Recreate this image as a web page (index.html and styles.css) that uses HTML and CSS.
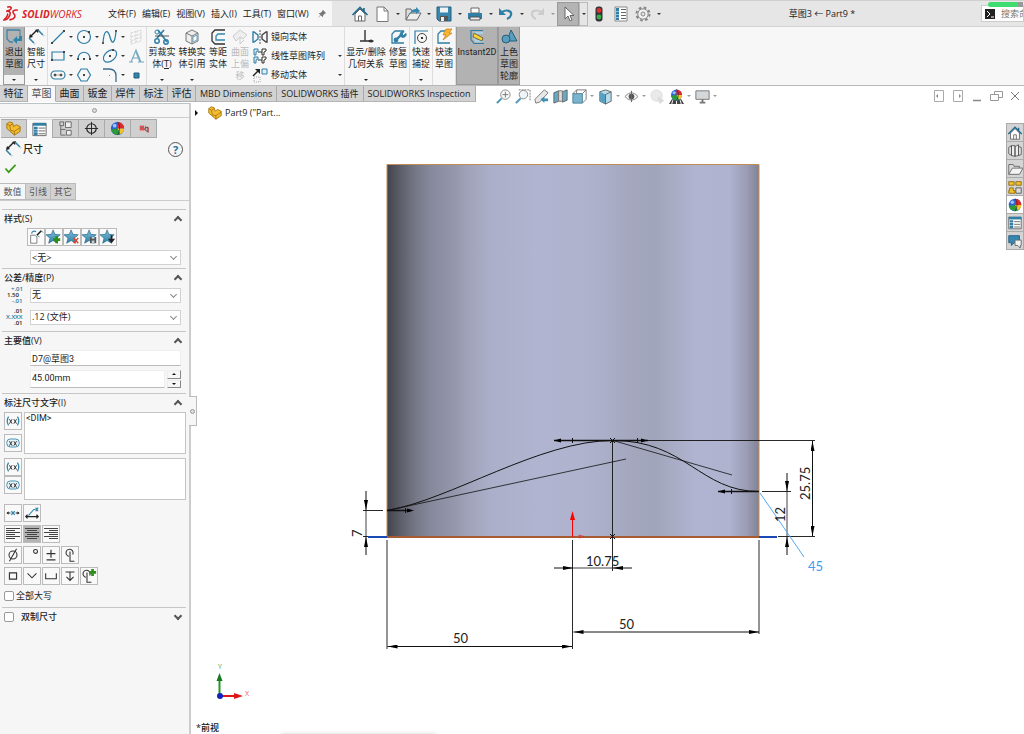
FILE: index.html
```html
<!DOCTYPE html>
<html lang="zh-CN">
<head>
<meta charset="utf-8">
<meta name="viewport" content="width=device-width, initial-scale=1">
<title>草图3 ← Part9 *</title>
<link rel="stylesheet" href="styles.css">
</head>
<body>
<svg class="defs" aria-hidden="true">
  <defs>
    <linearGradient id="star-fill" x1="0" y1="0" x2="0" y2="1"><stop offset="0" stop-color="#7cc0dc"/><stop offset="1" stop-color="#2f7fa6"/></linearGradient>
    <symbol id="i-home" viewBox="0 0 18 18"><path d="M4 9v7h10V9L9 4z" fill="#fff" stroke="#666"/><path d="M7.5 16v-5h3v5" fill="none" stroke="#666"/><path d="M1.500 10 9 2.500 16.500 10M13 3v3" fill="none" stroke="#23688c" stroke-width="1.600"/></symbol>
    <symbol id="i-part" viewBox="0 0 18 18"><path d="M2 9V4l3-2 3 1 1 4 3-2 4 2v5l-6 4z" fill="#f3bd2d" stroke="#a87612"/><path d="M2 4l3 2 1 5 4 1 6-4M10 12v4M5 6l3-2" fill="none" stroke="#a87612"/></symbol>
    <symbol id="i-props" viewBox="0 0 18 18"><path d="M2 2.500h14v13H2z" fill="#fff" stroke="#666"/><path d="M2 2h14v3H2z" fill="#2f7fa6"/><path d="M3 6h4v2.500H3zM3 9h4v2.500H3zM3 12h4v3H3z" fill="#2f7fa6"/><path d="M8 7.500h7M8 10.500h7M8 13.500h7" stroke="#666"/></symbol>
    <symbol id="i-dim" viewBox="0 0 18 18"><path d="M3 9 10 2" stroke="#222" stroke-width="1.500"/><path d="M2 10l1-4 3 3zM12 1 8 2l3 3z" fill="#222"/><path d="M2 10l6 6M11 2l6 6" stroke="#2f7fa6" stroke-width="1.500" stroke-dasharray="7 1"/></symbol>
    <symbol id="i-star" viewBox="0 0 18 18"><path d="M8 1l2 5 6 .5-4.500 4L13 16l-5-3-5 3 1.500-5.500L0 6.500 6 6z" fill="url(#star-fill)" stroke="#245f7e" stroke-width=".7"/></symbol>
    <symbol id="i-ball" viewBox="0 0 18 18"><circle cx="9" cy="9" r="7" fill="#2a62d4"/><path d="M9 2a7 7 0 0 1 7 7L9 9z" fill="#e1282b"/><path d="M9 9h7a7 7 0 0 1-4 6z" fill="#f4c32c"/><path d="M9 9l3 6a7 7 0 0 1-10-5z" fill="#2b9a3b"/><path d="M9 2c3 3 3 9 0 14" fill="none" stroke="#222" stroke-width=".7"/><circle cx="6" cy="6" r="2" fill="#9fc1fa"/></symbol>
    <symbol id="i-corner" viewBox="0 0 18 18"><path d="M15 3H6L3 6v9h12" fill="none" stroke="#2f7fa6" stroke-width="1.300"/></symbol>
    <symbol id="i-paren" viewBox="0 0 18 18"><path d="M4 4q-3 5 0 10M14 4q3 5 0 10" fill="none" stroke="#2f86ad" stroke-width="1.400"/><path d="M5 7l3 5M8 7l-3 5M10 7l3 5M13 7l-3 5" stroke="#222"/></symbol>
    <symbol id="i-round" viewBox="0 0 18 18"><rect x="2" y="4.500" width="14" height="9" rx="4" fill="#e8f2f6" stroke="#2f86ad"/><path d="M5 7l3 5M8 7l-3 5M10 7l3 5M13 7l-3 5" stroke="#222"/></symbol>
    <symbol id="i-lines-l" viewBox="0 0 16 16"><path d="M1 2.500h14M1 4.500h9M1 6.500h14M1 8.500h9M1 10.500h14M1 12.500h9" stroke="#444"/></symbol>
    <symbol id="i-lines-c" viewBox="0 0 16 16"><path d="M1 2.500h14M3 4.500h10M1 6.500h14M3 8.500h10M1 10.500h14M3 12.500h10" stroke="#444"/></symbol>
    <symbol id="i-lines-r" viewBox="0 0 16 16"><path d="M1 2.500h14M6 4.500h9M1 6.500h14M6 8.500h9M1 10.500h14M6 12.500h9" stroke="#444"/></symbol>
    <symbol id="i-cl" viewBox="0 0 18 18"><path d="M8 10.500a4 4 0 1 1 4-2" fill="none" stroke="#333" stroke-width="1.200"/><path d="M9 5v11h5" fill="none" stroke="#333" stroke-width="1.200"/></symbol>
  </defs>
</svg>

<header class="titlebar">
  <div class="brand">
    <svg class="brand-mark" viewBox="0 0 16 16" aria-hidden="true"><path d="M4 2c4-1 5 1 2 3L3 6c4-1 5 2 2 6-1 2-3 2-4 2 3-3 4-5 3-6M14 5c-3-1-6 1-4 3 2 2 2 5-4 6" fill="none" stroke="#d9232a" stroke-width="1.500"/></svg>
    <span class="brand-name"><b>SOLID</b>WORKS</span>
  </div>
  <nav class="menu" aria-label="主菜单">
    <button>文件(F)</button><button>编辑(E)</button><button>视图(V)</button><button>插入(I)</button><button>工具(T)</button><button>窗口(W)</button>
    <button class="pin" aria-label="固定"><svg viewBox="0 0 12 12"><path d="M7 1l4 4-1.500.5-2 2L7 10 4.500 7.500 1 11l3-4L2 5l2.500-.5 2-2z" fill="#777"/></svg></button>
  </nav>
  <div class="quick">
    <button class="qt" aria-label="主页"><svg><use href="#i-home"/></svg></button>
    <button class="qt" aria-label="新建"><svg viewBox="0 0 18 18"><path d="M4 2h7l4 4v10.500H4z" fill="#fff" stroke="#777"/><path d="M11 2v4h4" fill="none" stroke="#777"/></svg></button><button class="dd" aria-label="更多"></button>
    <button class="qt" aria-label="打开"><svg viewBox="0 0 18 18"><path d="M2 15V4h5l1 2h5v3" fill="#ddd" stroke="#666"/><path d="M2 15 6 8h11l-4 7z" fill="#eee" stroke="#666"/><path d="M6 9c1-4 4-5 6-5V2l4 4-4 3V7c-2 0-4 0-6 2z" fill="#3688b0"/></svg></button><button class="dd" aria-label="更多"></button>
    <button class="qt" aria-label="保存"><svg viewBox="0 0 18 18"><path d="M2 2h14v14H4l-2-2z" fill="#3a86ac" stroke="#245f7e"/><path d="M5 2.500h8v5H5z" fill="#eef3f5"/><path d="M5 11h8v5H5z" fill="#555"/><path d="M6 12h3v4H6z" fill="#eee"/></svg></button><button class="dd" aria-label="更多"></button>
    <button class="qt" aria-label="打印"><svg viewBox="0 0 18 18"><path d="M5 3h8v5H5z" fill="#fff" stroke="#666"/><path d="M2 8h14v6H2z" fill="#2f7fa6"/><path d="M4 12h10v3H4z" fill="#eee" stroke="#555"/></svg></button><button class="dd" aria-label="更多"></button>
    <button class="qt" aria-label="撤销"><svg viewBox="0 0 18 18"><path d="M5 7c5-3 10-1 9 3-.5 2-2 3-4 4" fill="none" stroke="#2f7fa6" stroke-width="2.200"/><path d="M2 3v7h7z" fill="#2f7fa6"/></svg></button><button class="dd" aria-label="更多"></button>
    <button class="qt" aria-label="重做"><svg viewBox="0 0 18 18"><path d="M13 7C8 4 3 6 4 10c.5 2 2 3 4 4" fill="none" stroke="#ccc" stroke-width="2.200"/><path d="M16 3v7H9z" fill="#ccc"/></svg></button><button class="dd dim" aria-label="更多"></button>
    <button class="qt on" aria-label="选择"><svg viewBox="0 0 18 18"><path d="M6 2v12l3-3 2 5 2-1-2-4.500h4z" fill="#fff" stroke="#666"/></svg></button><button class="dd boxed" aria-label="更多"></button>
    <button class="qt" aria-label="重建"><svg viewBox="0 0 18 18"><rect x="5.500" y="1.500" width="7" height="15" rx="3" fill="#333"/><circle cx="9" cy="5.500" r="2.400" fill="#df3030"/><circle cx="9" cy="12" r="2.400" fill="#35b14b"/></svg></button>
    <button class="qt" aria-label="文件属性"><svg viewBox="0 0 18 18"><path d="M3 2h12v14H3z" fill="#fff" stroke="#888"/><path d="M4 3h3v3H4zM4 6.500h3v2.500H4zM4 9.500h3V12H4zM4 12.500h3V15H4z" fill="#2f7fa6"/><path d="M9 4.500h5M9 7.500h5M9 10.500h5M9 13.500h5" stroke="#666"/></svg></button>
    <button class="qt" aria-label="选项"><svg viewBox="0 0 18 18"><circle cx="9" cy="9" r="6.500" fill="none" stroke="#888" stroke-width="2" stroke-dasharray="2.600 2.500"/><circle cx="9" cy="9" r="5.200" fill="#f2f2f2" stroke="#888"/><circle cx="9" cy="9" r="2" fill="#e6e6e6" stroke="#888"/></svg></button><button class="dd" aria-label="更多"></button>
  </div>
  <h1 class="doc-title">草图3 ← Part9 *</h1>
  <label class="search"><svg viewBox="0 0 10 10" aria-hidden="true"><path d="M0 0h10v10H0z" fill="#222"/><path d="M2 2l3 3-3 3M6 8h3" fill="none" stroke="#fff"/></svg><input type="text" placeholder="搜索命令" aria-label="搜索命令"><span class="progress"></span></label>
</header>

<section class="ribbon" aria-label="草图工具">
  <button class="tool pressed"><svg viewBox="0 0 18 18"><path d="M8 14H5L2 11V2h13" fill="none" stroke="#3d84a8" stroke-width="1.300"/><path d="M15 2v6" stroke="#3d84a8"/><path d="M8 12l4-4v2.500h2V8h3v5h-5v3z" fill="#2f86ad"/></svg><span>退出<br>草图</span><i class="caret light"></i></button>
  <button class="tool smart"><svg><use href="#i-dim"/></svg><span>智能<br>尺寸</span><i class="caret"></i></button>
  <div class="sketch-grid">
    <button aria-label="直线"><svg viewBox="0 0 18 18"><path d="M3 15 15 3" stroke="#2f7fa6" stroke-width="1.200"/><path d="M2 14h2v2H2zM14 2h2v2h-2z" fill="#444"/></svg></button><button class="dd" aria-label="更多"></button>
    <button aria-label="圆"><svg viewBox="0 0 18 18"><circle cx="9" cy="9" r="6.500" fill="none" stroke="#2f7fa6" stroke-width="1.200"/><path d="M8 8h2v2H8zM13 3h2v2h-2z" fill="#444"/></svg></button><button class="dd" aria-label="更多"></button>
    <button aria-label="样条曲线"><svg viewBox="0 0 18 18"><path d="M2 15C3 1 7 1 9 9s5 7 6-6" fill="none" stroke="#2f7fa6" stroke-width="1.300"/><path d="M1 14h2v2H1zM14 2h2v2h-2z" fill="#555"/></svg></button><button class="dd" aria-label="更多"></button>
    <button aria-label="平面"><svg viewBox="0 0 18 18"><path d="M4 5l10-3v11L4 16zM4 9l10-3M4 13l10-4M9 3v12" fill="none" stroke="#d0d0d0" stroke-dasharray="2 1"/></svg></button>
    <button aria-label="矩形"><svg viewBox="0 0 18 18"><path d="M3 5h12v8H3z" fill="none" stroke="#2f7fa6" stroke-width="1.200"/><path d="M2 12h2v2H2zM14 4h2v2h-2z" fill="#444"/></svg></button><button class="dd" aria-label="更多"></button>
    <button aria-label="圆弧"><svg viewBox="0 0 18 18"><path d="M3 12c0-9 12-9 12 0" fill="none" stroke="#2f7fa6" stroke-width="1.200"/><path d="M2 11h2v2H2zM14 11h2v2h-2zM8 11h2v2H8z" fill="#444"/></svg></button><button class="dd" aria-label="更多"></button>
    <button aria-label="椭圆"><svg viewBox="0 0 18 18"><ellipse cx="9" cy="9" rx="7.500" ry="5" transform="rotate(-40 9 9)" fill="none" stroke="#2f7fa6" stroke-width="1.200"/><path d="M8 8h2v2H8zM11 2h2v2h-2z" fill="#444"/></svg></button><button class="dd" aria-label="更多"></button>
    <button aria-label="文字"><svg viewBox="0 0 18 18"><path d="M2 15h4M11 15h6M4 15 9 3l5 12M6 11h6M9 5l4 10" fill="none" stroke="#75a9c2" stroke-width="1.100"/></svg></button>
    <button aria-label="槽口"><svg viewBox="0 0 18 18"><rect x="2" y="5" width="14" height="8" rx="4" fill="none" stroke="#2f7fa6" stroke-width="1.200"/><path d="M5 8h2v2H5zM11 8h2v2h-2zM7 9h4" fill="#444" stroke="#555" stroke-width=".5"/></svg></button><button class="dd" aria-label="更多"></button>
    <button aria-label="多边形"><svg viewBox="0 0 18 18"><path d="M6 3h6l3.500 6-3.500 6H6L2.500 9z" fill="none" stroke="#2f7fa6" stroke-width="1.200"/><path d="M8 8h2v2H8z" fill="#444"/></svg></button><span></span>
    <button aria-label="圆角"><svg viewBox="0 0 18 18"><path d="M2 3h6q7 0 7 7v6" fill="none" stroke="#3b6f8b" stroke-width="1.300"/><path d="M8 9h1v1H8z" fill="#888"/></svg></button><button class="dd" aria-label="更多"></button>
    <button aria-label="点"><svg viewBox="0 0 18 18"><path d="M7 7h5v5H7z" fill="#2f86ad" stroke="#245f7e"/></svg></button>
  </div>
  <div class="group edit">
    <button class="tool wide"><svg viewBox="0 0 18 18"><path d="M5 2l9 12M11 2 4 10" stroke="#2f7fa6" stroke-width="1.800"/><path d="M2 8h14" stroke="#555"/><circle cx="4" cy="13" r="2.200" fill="none" stroke="#2f7fa6" stroke-width="1.500"/><circle cx="13" cy="14" r="2.200" fill="none" stroke="#2f7fa6" stroke-width="1.500"/><circle cx="4" cy="4" r="2" fill="none" stroke="#2f7fa6"/></svg><span>剪裁实<br>体(<u>T</u>)</span><i class="caret"></i></button>
    <button class="tool wide"><svg viewBox="0 0 18 18"><path d="M3 5l6-3 6 3v8l-6 3-6-3z" fill="#eee" stroke="#777"/><path d="M3 5l6 3 6-3M9 8v8" fill="none" stroke="#777"/><path d="M10 9l4-2v5l-4 2z" fill="#fff" stroke="#69a5c1"/></svg><span>转换实<br>体引用</span><i class="caret"></i></button>
    <button class="tool"><svg viewBox="0 0 18 18"><path d="M16 2H6L3 5v8l3 3h10" fill="none" stroke="#333" stroke-width="1.300"/><path d="M16 6H9L7 8v4h9" fill="none" stroke="#2f86ad" stroke-width="1.300"/></svg><span>等距<br>实体</span></button>
    <button class="tool" disabled><svg viewBox="0 0 18 18"><path d="M2 8l7-6 7 5-4 4-3-2-4 4z" fill="#eee" stroke="#ccc"/><path d="M9 9v7l4-4" fill="none" stroke="#ccc"/></svg><span>曲面<br>上偏<br>移</span></button>
  </div>
  <div class="list">
    <button><svg viewBox="0 0 18 18"><path d="M2 4v10h1l4-3V7L3 4z" fill="none" stroke="#2f7fa6" stroke-width="1.400"/><path d="M16 4v10h-1l-4-3V7l4-3z" fill="none" stroke="#444" stroke-width="1.400"/><path d="M9 2v14" stroke="#555" stroke-dasharray="2 1"/></svg>镜向实体</button><span></span>
    <button><svg viewBox="0 0 18 18"><path d="M3 2h4v2L5 5v3H3zM3 10h4v2l-2 1v3H3z" fill="#d4eaf3" stroke="#2f7fa6"/><path d="M11 2h4v2l-2 1v3h-2zM11 10h4v2l-2 1v3h-2zM7 5h4M7 13h4" fill="none" stroke="#333"/></svg>线性草图阵列</button><button class="dd" aria-label="更多"></button>
    <button><svg viewBox="0 0 18 18"><path d="M11 3h5v5h-5z" fill="#e2eff5" stroke="#2f7fa6"/><path d="M2 10l5-5" stroke="#222" stroke-width="1.500"/><path d="M4 3h5v5z" fill="#222"/><path d="M3 11h6v5H3z" fill="none" stroke="#aaa" stroke-dasharray="1 1"/></svg>移动实体</button><button class="dd" aria-label="更多"></button>
  </div>
  <div class="group">
    <button class="tool rels"><svg viewBox="0 0 18 18"><path d="M8 2v11M3 13h10" stroke="#333" stroke-width="1.400"/><path d="M11 13q3-3 6 0-3 3-6 0" fill="#333"/></svg><span>显示/删除<br>几何关系</span><i class="caret"></i></button>
    <button class="tool"><svg><use href="#i-corner"/></svg><svg class="over" viewBox="0 0 18 18"><path d="M7 12l5-5" stroke="#2f7fa6" stroke-width="2.400"/><path d="M15 3.500 13 6l1.500 1.500 2.500-2a3 3 0 1 1-2-2z" fill="#2f7fa6" stroke="#2f7fa6"/><circle cx="7" cy="12" r="2.400" fill="#2f7fa6"/></svg><span>修复<br>草图</span></button>
  </div>
  <div class="group"><button class="tool"><svg viewBox="0 0 18 18"><path d="M3 16V3h13" fill="none" stroke="#2f7fa6" stroke-width="1.200"/><circle cx="10" cy="10" r="4.500" fill="none" stroke="#444"/><path d="M9 9h2v2H9z" fill="#333"/></svg><span>快速<br>捕捉</span><i class="caret"></i></button></div>
  <div class="group"><button class="tool"><svg><use href="#i-corner"/></svg><svg class="over" viewBox="0 0 18 18"><path d="M11 1h6l-3 4h3l-9 7 3-5H8z" fill="#f6b62c" stroke="#c87719" stroke-width=".7"/></svg><span>快速<br>草图</span></button></div>
  <button class="tool pressed instant"><svg viewBox="0 0 18 18"><path d="M15 2.500H3v9l3 4h10" fill="none" stroke="#2f7fa6" stroke-width="1.200"/><path d="M15 5H6v5l2 3h7" fill="none" stroke="#a9dcee" stroke-width="1.400"/><path d="M6 5l9 5-1 3-9-4z" fill="#f6d330" stroke="#444" stroke-width=".7"/></svg><span>Instant2D</span></button>
  <button class="tool pressed"><svg viewBox="0 0 18 18"><path d="M11 2l6 11H7z" fill="#5a9dbd" stroke="#245f7e"/><circle cx="6" cy="11" r="4" fill="#5a9dbd" stroke="#245f7e"/></svg><span>上色<br>草图<br>轮廓</span></button>
</section>

<div class="tabrow">
  <nav class="tabs" aria-label="命令管理器">
    <button>特征</button><button class="active">草图</button><button>曲面</button><button>钣金</button><button>焊件</button><button>标注</button><button>评估</button><button class="en">MBD Dimensions</button><button class="en">SOLIDWORKS 插件</button><button class="en">SOLIDWORKS Inspection</button>
  </nav>
  <div class="viewtools">
    <button aria-label="整屏显示"><svg viewBox="0 0 18 18"><circle cx="11" cy="7" r="5" fill="#f6f8f9" stroke="#888"/><path d="M11 4v6M8 7h6" stroke="#777"/><path d="M7 11l-5 5" stroke="#4a97bb" stroke-width="2.200"/></svg></button>
    <button aria-label="局部放大"><svg viewBox="0 0 18 18"><path d="M5 2h12v12" fill="none" stroke="#777" stroke-dasharray="2 1"/><circle cx="10" cy="7" r="4.500" fill="#eef5f8" stroke="#888"/><path d="M7 11l-5 5" stroke="#4a97bb" stroke-width="2.200"/></svg></button>
    <button aria-label="上一视图"><svg viewBox="0 0 18 18"><path d="M2 12 12 2l4 3L7 15l-4 1z" fill="#e8e8e8" stroke="#777"/><path d="M8 12l4-3v2h4v3h-4v2z" fill="#3f90b6"/></svg></button>
    <button aria-label="剖面视图"><svg viewBox="0 0 18 18"><path d="M2 5l5-2v11l-5 2zM11 4l5-2v11l-5 2z" fill="#65a9c7" stroke="#666"/><path d="M7 3h4v11H7z" fill="#ddd" stroke="#777"/></svg></button>
    <button aria-label="视图定向"><svg viewBox="0 0 18 18"><path d="M2 6h10v10H2z" fill="#79b5cf" stroke="#4b7f98"/><path d="M2 6l4-4h10v10l-4 4M16 2l-4 4M6 2v4" fill="none" stroke="#777"/></svg></button><button class="dd dim" aria-label="更多"></button>
    <button aria-label="显示样式"><svg viewBox="0 0 18 18"><path d="M3 4l6-2 6 2v10l-6 3-6-3z" fill="#b4dbea" stroke="#666"/><path d="M3 4l6 3v10l-6-3z" fill="#56a0c2"/><path d="M9 7l6-3M9 7v10" stroke="#666"/></svg></button><button class="dd dim" aria-label="更多"></button>
    <button aria-label="隐藏/显示"><svg viewBox="0 0 18 18"><path d="M2 9q7-8 14 0-7 8-14 0z" fill="#f5f5f5" stroke="#888"/><circle cx="9" cy="9" r="3" fill="#555"/><path d="M9 3v12" stroke="#666"/></svg></button><button class="dd dim" aria-label="更多"></button>
    <button aria-label="编辑外观"><svg viewBox="0 0 18 18"><circle cx="8" cy="8" r="6" fill="#e9e9e9" stroke="#ddd"/><path d="M10 9l6 4-4 4-3-4z" fill="#dcdcdc"/></svg></button>
    <button aria-label="应用布景"><svg viewBox="0 0 18 18"><path d="M1 17l3-5h10l3 5z" fill="#444"/><path d="M5 13l-1 4M9 13v4M13 13l1 4" stroke="#fff"/></svg><svg class="over" viewBox="0 0 18 18"><use href="#i-ball" x="1" width="16" height="15"/></svg></button><button class="dd dim" aria-label="更多"></button>
    <button aria-label="视图设定"><svg viewBox="0 0 18 18"><path d="M2 3h14v9H2z" fill="#d5d8da" stroke="#777"/><path d="M9 12v3M6 15.500h6" stroke="#777" stroke-width="2"/></svg></button><button class="dd dim" aria-label="更多"></button>
  </div>
  <div class="winbtns">
    <button aria-label="左侧窗格"><svg viewBox="0 0 18 18"><path d="M4.500 3.500h9v11h-9z" fill="none" stroke="#aaa"/><path d="M8 7v4L6 9z" fill="#888"/></svg></button>
    <button aria-label="右侧窗格"><svg viewBox="0 0 18 18"><path d="M4.500 3.500h9v11h-9z" fill="none" stroke="#aaa"/><path d="M10 7v4l2-2z" fill="#888"/></svg></button>
    <button aria-label="最小化"><svg viewBox="0 0 18 18"><path d="M5 13.500h8" stroke="#888" stroke-width="1.500"/></svg></button>
    <button aria-label="还原"><svg viewBox="0 0 18 18"><path d="M3.500 7.500h8v6h-8zM7.500 7V4.500h8v6H12" fill="none" stroke="#999"/></svg></button>
    <button aria-label="关闭"><svg viewBox="0 0 18 18"><path d="M5 5l8 8M13 5l-8 8" stroke="#777"/></svg></button>
  </div>
</div>

<main class="work">
  <aside class="panel" aria-label="属性管理器">
    <div class="grip"><i class="dot"></i></div>
    <div class="ptabs">
      <button aria-label="特征树"><svg><use href="#i-part"/></svg></button><button class="active" aria-label="属性"><svg><use href="#i-props"/></svg></button>
      <button aria-label="配置"><svg viewBox="0 0 18 18"><path d="M3 2h4v4H3zM4 6v10h5M4 10h5" fill="none" stroke="#666"/><path d="M9 2h6v6H9zM10 11h5v5h-5z" fill="#eee" stroke="#666"/></svg></button>
      <button aria-label="尺寸专家"><svg viewBox="0 0 18 18"><circle cx="9" cy="9" r="5" fill="none" stroke="#222" stroke-width="1.200"/><path d="M9 2v14M2 9h14" stroke="#222"/></svg></button>
      <button aria-label="外观"><svg><use href="#i-ball"/></svg></button>
      <button aria-label="检查"><svg viewBox="0 0 18 18"><path d="M5 6h4v5H5z" fill="#e54c4c"/><path d="M9 6v5M11 6v5M13 7v5M6 8h3" stroke="#777"/><path d="M11 8h3v5l-4-3z" fill="none" stroke="#933"/></svg></button>
    </div>
    <header class="phead"><svg><use href="#i-dim"/></svg><h2>尺寸</h2><button class="help" aria-label="帮助">?</button></header>
    <button class="ok" aria-label="确定"><svg viewBox="0 0 14 12"><path d="M1.500 6 5 10l7.500-8" fill="none" stroke="#389b16" stroke-width="1.800"/></svg></button>
    <div class="subtabs"><button class="active">数值</button><button>引线</button><button>其它</button></div>

    <section class="sec s-style">
      <h3>样式(S)<i class="chev"></i></h3>
      <div class="stars">
        <button aria-label="应用默认"><svg viewBox="0 0 18 18"><path d="M3 7h5l2 2v7H3z" fill="#fff" stroke="#777"/><path d="M4 5c1-3 3-3 5-2" fill="none" stroke="#2f7fa6" stroke-width="1.300"/><path d="M10 7l5-5" stroke="#222" stroke-width="1.800"/><path d="M13 9l-3-2M15 2l2 2" stroke="#2f7fa6"/></svg></button>
        <button aria-label="添加样式"><svg><use href="#i-star"/></svg><svg class="over" viewBox="0 0 18 18"><path d="M12 8v8M8 12h8" stroke="#2d8f1a" stroke-width="3"/></svg></button>
        <button aria-label="删除样式"><svg><use href="#i-star"/></svg><svg class="over" viewBox="0 0 18 18"><path d="M11 10l5 6M16 10l-5 6" stroke="#e23b1d" stroke-width="1.500"/></svg></button>
        <button aria-label="保存样式"><svg><use href="#i-star"/></svg><svg class="over" viewBox="0 0 18 18"><path d="M9 9h7v7H9z" fill="#555"/><path d="M11 9h3v2h-3zM11 13h3v3h-3z" fill="#b9d4df"/></svg></button>
        <button aria-label="装入样式"><svg><use href="#i-star"/></svg><svg class="over" viewBox="0 0 18 18"><path d="M12 7v4H9l4 5 4-5h-3V7z" fill="#222"/></svg></button>
      </div>
      <div class="sel"><select aria-label="样式"><option>&lt;无&gt;</option></select></div>
    </section>
    <section class="sec s-tol">
      <h3>公差/精度(P)<i class="chev"></i></h3>
      <div class="field"><svg viewBox="0 0 18 18"><text x="1" y="11" class="t-dark">1.50</text><text x="5" y="5" class="t-blue">+.01</text><text x="6" y="17" class="t-blue">-.01</text></svg><div class="sel"><select aria-label="公差类型"><option>无</option></select></div></div>
      <div class="field"><svg viewBox="0 0 18 18"><text x="0" y="11" class="t-blue">X.XXX</text><text x="8" y="5" class="t-dark">.01</text><text x="8" y="17" class="t-dark">.01</text></svg><div class="sel"><select aria-label="单位精度"><option>.12 (文件)</option></select></div></div>
    </section>
    <section class="sec s-val">
      <h3>主要值(V)<i class="chev"></i></h3>
      <input type="text" value="D7@草图3" aria-label="名称">
      <div class="spin"><input type="text" value="45.00mm" aria-label="尺寸值"><div><button aria-label="增加"><i class="up"></i></button><button aria-label="减少"><i class="down"></i></button></div></div>
    </section>
    <section class="sec s-text">
      <h3>标注尺寸文字(I)<i class="chev"></i></h3>
      <div class="note first"><div><button class="tb" aria-label="加括号"><svg><use href="#i-paren"/></svg></button><button class="tb" aria-label="检查尺寸"><svg><use href="#i-round"/></svg></button></div><textarea aria-label="尺寸文字">&lt;DIM&gt;</textarea></div>
      <div class="note"><div><button class="tb" aria-label="加括号"><svg><use href="#i-paren"/></svg></button><button class="tb" aria-label="检查尺寸"><svg><use href="#i-round"/></svg></button></div><textarea aria-label="下方文字"></textarea></div>
      <div class="btns"><button class="tb" aria-label="居中尺寸"><svg viewBox="0 0 18 18"><path d="M2 9h4M12 9h4" stroke="#222" stroke-width="1.300"/><path d="M4 7v4L2 9zM14 7v4l2-2z" fill="#222"/><path d="M7 7l4 4M11 7l-4 4" stroke="#2f86ad" stroke-width="1.300"/></svg></button><button class="tb" aria-label="等距文字"><svg viewBox="0 0 18 18"><path d="M2 13h14M4 11l-2 2 2 2M14 11l2 2-2 2" fill="none" stroke="#222" stroke-width="1.300"/><path d="M5 12l6-7h2M13 3l3 4M16 3l-3 4" fill="none" stroke="#2f86ad" stroke-width="1.200"/></svg></button></div>
      <div class="btns"><button class="tb" aria-label="左对齐"><svg><use href="#i-lines-l"/></svg></button><button class="tb on" aria-label="居中"><svg><use href="#i-lines-c"/></svg></button><button class="tb" aria-label="右对齐"><svg><use href="#i-lines-r"/></svg></button></div>
      <div class="btns"><button class="tb" aria-label="直径"><svg viewBox="0 0 18 18"><circle cx="9" cy="9" r="4.500" fill="none" stroke="#333" stroke-width="1.200"/><path d="M5 16l8-14" stroke="#333" stroke-width="1.200"/></svg></button><button class="tb" aria-label="度"><svg viewBox="0 0 18 18"><circle cx="13" cy="5" r="2.200" fill="none" stroke="#333" stroke-width="1.200"/></svg></button><button class="tb" aria-label="正负"><svg viewBox="0 0 18 18"><path d="M9 3v9M4 7.500h10M4 14.500h10" stroke="#333" stroke-width="1.300"/></svg></button><button class="tb" aria-label="中心线"><svg><use href="#i-cl"/></svg></button></div>
      <div class="btns"><button class="tb" aria-label="方形"><svg viewBox="0 0 18 18"><path d="M5 5.500h8v7H5z" fill="none" stroke="#333" stroke-width="1.300"/></svg></button><button class="tb" aria-label="埋头孔"><svg viewBox="0 0 18 18"><path d="M4 6l5 5 5-5" fill="none" stroke="#333" stroke-width="1.200"/></svg></button><button class="tb" aria-label="柱形沉头孔"><svg viewBox="0 0 18 18"><path d="M3 6v6h12V6" fill="none" stroke="#333" stroke-width="1.200"/></svg></button><button class="tb" aria-label="深度"><svg viewBox="0 0 18 18"><path d="M4 4.500h10M9 5v9M5 10l4 4 4-4" fill="none" stroke="#333" stroke-width="1.200"/></svg></button><button class="tb" aria-label="更多符号"><svg><use href="#i-cl" x="-2"/></svg><svg class="over" viewBox="0 0 18 18"><path d="M13 1v8M9 5h8" stroke="#2d8f1a" stroke-width="3"/></svg></button></div>
      <label class="check caps"><input type="checkbox">全部大写</label>
    </section>
    <section class="sec"><h3 class="dual"><label class="check"><input type="checkbox">双制尺寸</label><i class="chev closed"></i></h3></section>
    <button class="handle" aria-label="折叠面板"><i class="dot"></i></button>
  </aside>

  <div class="viewport">
    <svg class="model" viewBox="191 103 833 631" role="img" aria-label="草图3 前视图">
      <defs>
        <linearGradient id="cyl"><stop offset="0" stop-color="#42434c"/><stop offset=".04" stop-color="#5f616d"/><stop offset=".08" stop-color="#777988"/><stop offset=".12" stop-color="#868a9c"/><stop offset=".17" stop-color="#9295a9"/><stop offset=".22" stop-color="#a0a3b9"/><stop offset=".28" stop-color="#abafc9"/><stop offset=".4" stop-color="#b0b4d0"/><stop offset=".52" stop-color="#afb3ce"/><stop offset=".58" stop-color="#abafc9"/><stop offset=".66" stop-color="#a3a6bd"/><stop offset=".72" stop-color="#a1a5bb"/><stop offset=".78" stop-color="#a9adc6"/><stop offset=".83" stop-color="#b0b4d0"/><stop offset=".92" stop-color="#afb3cf"/><stop offset=".97" stop-color="#989bb1"/><stop offset="1" stop-color="#808395"/></linearGradient>
        <marker id="arr" viewBox="0 0 10 4" refX="10" refY="2" markerWidth="10" markerHeight="4" markerUnits="userSpaceOnUse" orient="auto-start-reverse"><path d="M0 0l10 2-10 2z"/></marker>
      </defs>
      <path d="M387 164.500h372V537H387z" fill="url(#cyl)" stroke="#c48c55"/>
      <path d="M368 537h19M759 537h18" stroke="#1b49b5" stroke-width="2"/>
      <path d="M387 537h372" stroke="#a65b35" stroke-width="2"/>
      <g fill="none" stroke="#111">
        <path d="M387 510.500C450 500 540 440.500 613 440.500S700 491.500 759 491.500"/>
        <path d="M387 510.500 626 459M613 440.500 732 475" stroke-width=".8"/>
        <path d="M387 510.500h24M718 491.500h41M554 440.500h94" stroke-width="1.500"/>
        <path d="M613 440.500h202M612.500 440v131M387 540v109M572.500 540v109M759 540v94" stroke-width=".9"/>
        <path d="M363 510.500h20M762 491.500h29M778 536.500h37M363 536.500h5" stroke-width=".9"/>
        <path d="M387.500 646.500H572" marker-start="url(#arr)" marker-end="url(#arr)"/>
        <path d="M573.500 632H759" marker-start="url(#arr)" marker-end="url(#arr)"/>
        <path d="M812.500 441v95" marker-start="url(#arr)" marker-end="url(#arr)"/>
        <path d="M366 491v19" marker-end="url(#arr)"/><path d="M366 555v-18" marker-end="url(#arr)"/>
        <path d="M787 473v18" marker-end="url(#arr)"/><path d="M787 555v-18" marker-end="url(#arr)"/>
        <path d="M554 568h19" marker-end="url(#arr)"/><path d="M632 568h-19" marker-end="url(#arr)"/>
        <path d="M366 510v27M787 491v46M573 568h40" stroke-width=".8"/>
        <path d="M610 438l5 5M615 438l-5 5M610 534l5 5M615 534l-5 5M572.500 438v5M637.500 438v5M405.500 508v5M731.500 489v5"/>
      </g>
      <path d="M554 440.500l7-2v4zM648 440.500l-7-2v4zM414 510.500l-7-2v4zM718 491.500l7-2v4z"/>
      <path d="M572.500 537v-19" stroke="#f00"/><path d="M572.500 511l2.500 9h-5z" fill="#f00"/><path d="M579 535l5 1.500-5 1.500z" fill="none" stroke="#d33" stroke-width=".8"/>
      <path d="M760 493 804 557" stroke="#55a8f5"/>
      <g class="dims"><text x="453" y="643">50</text><text x="619" y="629">50</text><text x="586" y="566">10.75</text><text transform="translate(362 537) rotate(-90)">7</text><text transform="translate(785 522) rotate(-90)">12</text><text transform="translate(810 500) rotate(-90)">25.75</text><text class="picked" x="808" y="571">45</text></g>
    </svg>
    <div class="tree"><i class="expander"></i><svg><use href="#i-part"/></svg><span>Part9 ("Part...</span></div>
    <div class="taskpane">
      <button aria-label="资源"><svg><use href="#i-home"/></svg></button>
      <button aria-label="设计库"><svg viewBox="0 0 18 18"><path d="M2 5l3-2v11l-3-2zM5 3h4v12l-4-1zM9 4l4-2v12l-4 1zM13 4l3 1v8l-3 1z" fill="#eee" stroke="#555"/></svg></button>
      <button aria-label="文件探索器"><svg viewBox="0 0 18 18"><path d="M2 15V4h5l1 2h6v3" fill="#ddd" stroke="#666"/><path d="M2 15 6 8h12l-4 7z" fill="#f3f3f3" stroke="#666"/></svg></button>
      <button aria-label="视图调色板"><svg viewBox="0 0 18 18"><path d="M2 3h6v4H2zM10 3h6v4h-6zM3 10h4v3h2v3H2v-3h1z" fill="#f4c32c" stroke="#8b6915"/><path d="M10 10h6v6h-6z" fill="#ddd" stroke="#555"/></svg></button>
      <button class="active" aria-label="外观"><svg><use href="#i-ball"/></svg></button>
      <button aria-label="自定义属性"><svg><use href="#i-props"/></svg></button>
      <button aria-label="论坛"><svg viewBox="0 0 18 18"><path d="M2 3h12v8H8l-3 3v-3H2z" fill="#3688b0" stroke="#245f7e"/><path d="M9 8h7v6h-1v3l-3-3H9z" fill="#f3f3f3" stroke="#666"/></svg></button>
    </div>
    <div class="orient">
      <svg viewBox="0 0 40 40" aria-hidden="true"><path d="M8.500 32V14" stroke="#22962c" stroke-width="2"/><path d="M8.500 9l3 8h-6z" fill="#167a20"/><path d="M9 32h15" stroke="#e01515" stroke-width="2"/><path d="M32 32l-9-3v6z" fill="#e01515"/><circle cx="9" cy="32" r="3" fill="#1420bd"/><text x="7" y="5" fill="#3ba53f">Y</text><text x="34" y="32" fill="#ee5a5a">X</text></svg>
      <strong>*前视</strong>
    </div>
    <div class="dockshade"></div>
  </div>
</main>
</body>
</html>
```

FILE: styles.css
```css
* { box-sizing: border-box; }
html, body { height: 100%; }
body {
  margin: 0;
  display: flex;
  flex-direction: column;
  overflow: hidden;
  background: #fff;
  color: #222;
  font: 9px/12px "Open Sans", "Noto Sans CJK SC", sans-serif;
}
button, input, select, textarea { font: inherit; color: inherit; border-radius: 0; }
button { margin: 0; padding: 0; border: 0; background: none; position: relative; }
h1, h2, h3 { margin: 0; font-size: 9px; font-weight: 400; }
svg { display: block; width: 18px; height: 18px; flex: none; }
.defs { position: absolute; width: 0; height: 0; }

/* Title bar */
.titlebar {
  display: flex;
  align-items: center;
  height: 27px;
  flex: none;
  background: #e6e6e6;
  border-top: 1px solid #d0d0d0;
  border-bottom: 1px solid #d4d4d4;
  white-space: nowrap;
}
.brand, .menu { align-self: stretch; display: flex; align-items: center; background: #f7f7f7; }
.brand { width: 108px; padding-left: 3px; gap: 2px; color: #d9232a; }
.brand-mark { width: 17px; height: 17px; }
.brand-name { font: italic 10px/14px "Open Sans", sans-serif; }
.menu { width: 224px; gap: 6px; }
.menu .pin { margin-left: auto; margin-right: 5px; }
.pin svg { width: 10px; height: 10px; }
.quick { display: flex; align-items: center; height: 24px; padding-left: 17px; }
.qt { width: 22px; height: 24px; display: grid; place-items: center; }
.qt.on { background: #b4b4b4; border: 1px solid #999; }
.dd { width: 9px; align-self: stretch; display: grid; place-items: center; }
.dd::before { content: ""; border: 2px solid transparent; border-top-color: #333; border-bottom: 0; }
.dd.dim::before { border-top-color: #999; }
.dd.boxed { border: 1px solid #bbb; }
.doc-title { flex: 1; text-align: center; }
.search {
  position: relative;
  display: flex;
  align-items: center;
  gap: 6px;
  width: 43px;
  height: 17px;
  padding-left: 3px;
  background: #fff;
  border: 1px solid #ccc;
  overflow: visible;
}
.search svg { width: 10px; height: 10px; }
.search input { flex: 1; min-width: 0; padding: 0; border: 0; background: none; }
.search input::placeholder { color: #777; opacity: 1; }
.progress {
  position: absolute;
  top: -4px;
  left: 6px;
  right: 0;
  height: 5px;
  border-radius: 3px 0 0 3px;
  background: linear-gradient(90deg, #3fdc70 0 30px, #999 30px);
}

/* Ribbon */
.ribbon {
  display: flex;
  height: 59px;
  flex: none;
  padding-left: 3px;
  background: #f7f7f7;
  border-bottom: 1px solid #b8b8b8;
}
.tool {
  display: flex;
  flex-direction: column;
  align-items: center;
  width: 22px;
  padding-top: 1px;
  line-height: 12px;
  white-space: nowrap;
}
.tool:disabled { color: #bbb; }
.tool.pressed { background: #b2b2b2; border: 1px solid #999; border-top: 0; }
.caret { margin: auto 0 4px; border: 2px solid transparent; border-top-color: #222; border-bottom: 0; }
.caret.light { align-self: stretch; height: 9px; margin: auto 0 0; border: 0; background: #f2f2f2; display: grid; place-items: center; }
.caret.light::before { content: ""; border: 2px solid transparent; border-top-color: #222; border-bottom: 0; }
.over { position: absolute; }
.tool .over { top: 1px; }
.sketch-grid {
  display: grid;
  grid-template-columns: 18px 8px 18px 8px 18px 8px 18px;
  grid-template-rows: repeat(3, 19px);
  align-items: center;
  padding: 0 1px;
  border: solid #ddd;
  border-width: 0 1px;
}
.sketch-grid .dd { width: 8px; }
.group { display: flex; border-right: 1px solid #ddd; }
.group.edit { border: 0; }
.tool.wide { width: 30px; }
.list {
  display: grid;
  grid-template-columns: 84px 9px;
  grid-template-rows: repeat(3, 19px);
  border-right: 1px solid #ddd;
}
.list button:not(.dd) { display: flex; align-items: center; gap: 2px; white-space: nowrap; }
.tool.rels { width: 42px; }
.tool.instant { width: 42px; font-family: Roboto, sans-serif; }

/* Command tabs and view toolbar */
.tabrow { display: flex; height: 17px; flex: none; align-items: flex-start; }
.tabs { display: flex; background: #d2d2d2; height: 16px; }
.tabs button { min-width: 28px; padding: 0 3px; border-right: 1px solid #aaa; border-bottom: 1px solid #b5b5b5; font-size: 10px; line-height: 15px; white-space: nowrap; }
.tabs .en { font-size: 9px; padding: 0 4px; }
.tabs .active { background: #f7f7f7; border-bottom-color: #f7f7f7; color: #555; }
.viewtools { display: flex; margin-left: 18px; padding-top: 1px; }
.viewtools button:not(.dd) { width: 19px; height: 18px; display: grid; place-items: center; }
.viewtools svg { width: 17px; height: 17px; }
.viewtools .dd { width: 7px; }
.winbtns { display: flex; margin-left: auto; padding-top: 1px; }
.winbtns button { width: 19px; display: grid; place-items: center; }

/* Work area */
.work { display: flex; flex: 1; min-height: 0; }
.panel {
  position: relative;
  z-index: 1;
  display: flex;
  flex-direction: column;
  width: 191px;
  flex: none;
  background: #f6f6f6;
  border-top: 1px solid #b9c3c8;
  border-right: 2px solid #ccc;
}
.grip { height: 14px; display: grid; place-items: center; border-bottom: 1px solid #ccc; }
.dot { width: 5px; height: 5px; border: 1px solid #999; border-radius: 50%; background: #ddd; }
.ptabs { display: flex; margin-top: 1px; padding-left: 1px; height: 19px; }
.ptabs button { width: 26px; display: grid; place-items: center; background: #d0d0d0; border: 1px solid #aaa; border-left-width: 0; }
.ptabs svg { width: 17px; height: 17px; }
.ptabs .active { background: #f8f8f8; border-bottom: 0; border-top-color: #ddd; }
.phead { display: flex; align-items: center; height: 22px; padding: 0 6px 0 4px; gap: 1px; }
.phead h2 { font-size: 10px; font-weight: 500; flex: 1; }
.help { width: 15px; height: 15px; border: 1px solid #555; border-radius: 50%; color: #22739b; font: bold 11px/13px "Open Sans", sans-serif; }
.ok { align-self: flex-start; margin: 2px 0 0 4px; height: 12px; }
.ok svg { width: 13px; height: 11px; }
.subtabs { display: flex; height: 18px; margin-top: 9px; border-bottom: 1px solid #ccc; }
.subtabs button { width: 25px; background: #d2d2d2; border: 1px solid #bbb; border-left: 0; color: #555; }
.subtabs .active { width: 26px; background: #f6f6f6; }
.sec { margin: 0 3px 0 2px; border-top: 1px solid #c6c6c6; }
.sec h3 { display: flex; align-items: center; justify-content: space-between; height: 18px; padding: 0 5px 0 2px; font-weight: 500; }
.chev { width: 6px; height: 6px; border: solid #555; border-width: 2px 0 0 2px; transform: translateY(1px) rotate(45deg); }
.chev.closed { transform: translateY(-1px) rotate(225deg); }
.s-style { margin-top: 8px; padding-bottom: 2px; }
.stars { display: flex; margin: 0 0 4px 25px; }
.stars button { width: 18px; height: 18px; display: grid; place-items: center; border: 1px solid #bbb; background: #fafafa; }
.stars svg { width: 16px; height: 16px; }
.sel { position: relative; flex: 1; }
.s-style .sel { margin: 0 5px 0 28px; padding-bottom: 1px; }
select { appearance: none; display: block; width: 100%; height: 15px; padding: 0 1px; background: #fff; border: 1px solid #d2d2d2; }
.sel::after { content: ""; position: absolute; right: 5px; top: 4px; width: 4px; height: 4px; border: solid #888; border-width: 0 1px 1px 0; transform: rotate(45deg); }
.s-tol { padding-bottom: 6px; }
.field { display: flex; align-items: center; gap: 6px; height: 16px; padding: 0 5px 0 4px; }
.field + .field { margin-top: 6px; }
.field svg { overflow: visible; }
.field text { font: 600 6px "Open Sans", sans-serif; }
.t-dark { fill: #222; }
.t-blue { fill: #2278a0; }
.s-val { padding-bottom: 5px; }
.s-val > input, .spin { width: auto; margin: 0 5px 0 28px; }
.s-val input { display: block; min-width: 0; padding: 0 1px; height: 16px; border: 1px solid #eee; border-bottom-color: #bbb; background: #fff; font-family: Roboto, "Noto Sans CJK SC", sans-serif; }
.s-val > input { width: calc(100% - 33px); }
.spin { display: flex; gap: 2px; margin-top: 4px; }
.s-val .spin input { flex: 1; height: 18px; padding-bottom: 3px; }
.spin > div { display: grid; gap: 1px; }
.spin button { width: 14px; display: grid; place-items: center; border: 1px solid #eee; border-right-color: #888; border-bottom-color: #888; }
.up, .down { border: 2px solid transparent; }
.up { border-bottom-color: #111; border-top: 0; }
.down { border-top-color: #111; border-bottom: 0; }
.s-text { padding-bottom: 4px; }
.note { display: flex; gap: 2px; height: 42px; margin: 0 0 4px 2px; }
.note.first > div { display: grid; gap: 4px; align-content: start; }
.note textarea { flex: 1; min-width: 0; resize: none; padding: 0 1px; border: 1px solid #c4c4c4; background: #fff; line-height: 10px; font-family: Roboto, "Noto Sans CJK SC", sans-serif; }
.tb { width: 18px; height: 18px; display: grid; place-items: center; border: 1px solid #bbb; background: #f9f9f9; }
.tb svg { width: 16px; height: 16px; }
.tb.on { background: #b4b4b4; }
.btns { display: flex; gap: 1px; margin: 0 0 3px 2px; }
.check { display: flex; align-items: center; gap: 2px; padding-left: 2px; height: 14px; }
.check.caps { margin-top: 4px; }
.check input { appearance: none; width: 10px; height: 10px; margin: 0; border: 1px solid #999; border-radius: 2px; background: #fff; }
.sec .dual { padding-left: 0; }
.dual .check { gap: 7px; }
.handle { position: absolute; left: 189px; top: 292px; width: 8px; height: 30px; display: grid; place-items: center; background: #f6f6f6; border: 1px solid #bbb; border-left: 0; }

/* Graphics area */
.viewport { position: relative; flex: 1; min-width: 0; display: grid; grid-template: auto 1fr auto / 1fr auto; overflow: hidden; }
.model { position: absolute; inset: 0; width: 100%; height: 100%; }
.dims { font: 13px Lato, sans-serif; fill: #222; }
.picked { fill: #429ef0; }
.tree { position: relative; display: flex; align-items: center; height: 20px; padding-left: 4px; }
.tree svg { width: 16px; height: 16px; margin: 0 2px 0 9px; }
.expander { border: 3px solid transparent; border-left-color: #111; border-right: 0; }
.taskpane { position: relative; grid-column: 2; grid-row: 2; width: 18px; display: flex; flex-direction: column; border-top: 1px solid #aaa; }
.taskpane button { height: 18px; display: grid; place-items: center; background: #d4d4d4; border: 1px solid #aaa; border-top-width: 0; }
.taskpane svg { width: 16px; height: 16px; }
.taskpane .active { background: #fff; }
.orient { position: relative; grid-row: 3; padding-left: 5px; }
.orient svg { width: 40px; height: 40px; margin: 0 0 17px 15px; overflow: visible; }
.orient text { font: 7px "Open Sans", sans-serif; }
.orient strong { display: block; font-size: 9px; line-height: 13px; font-weight: 500; color: #111; }
.dockshade { position: absolute; left: 90px; bottom: -5px; width: 155px; height: 4px; box-shadow: 0 0 5px #bbb; }
```
